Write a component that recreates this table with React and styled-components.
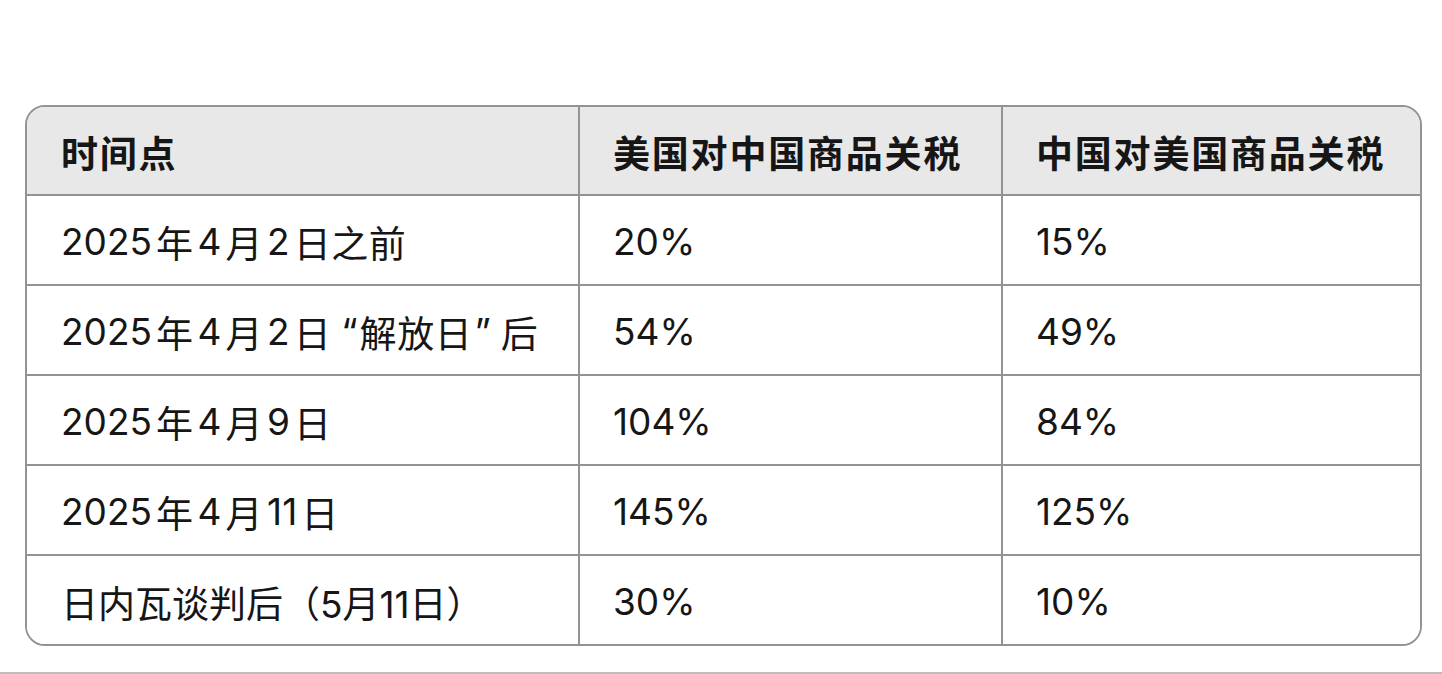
import React from 'react';
import styled, { createGlobalStyle } from 'styled-components';

const GlobalStyle = createGlobalStyle`
  html, body {
    margin: 0;
    padding: 0;
    background: #ffffff;
  }
  body {
    font-family: Inter, "Noto Sans CJK SC", sans-serif;
    color: #161616;
  }
`;

const Page = styled.div`
  width: 1442px;
  height: 674px;
  box-sizing: border-box;
  padding: 105px 20px 0 25px;
  border-bottom: 2px solid #bdbdbd;
`;

const Table = styled.div`
  display: grid;
  grid-template-columns: 551px 423px 1fr;
  width: 1397px;
  border: 2px solid #939393;
  border-radius: 20px;
  overflow: hidden;
  box-sizing: border-box;
`;

const Cell = styled.div`
  height: ${p => (p.head ? 87 : 90)}px;
  box-sizing: border-box;
  display: flex;
  align-items: center;
  padding-left: ${p => (p.first ? 34 : 33)}px;
  padding-top: 3px;
  background: ${p => (p.head ? '#e8e8e8' : '#ffffff')};
  font-size: 37px;
  letter-spacing: ${p => (p.head ? 1.8 : 0)}px;
  font-weight: ${p => (p.head ? 700 : 400)};
  color: #161616;
  white-space: nowrap;
  border-left: ${p => (p.first ? 'none' : '2px solid #939393')};
  border-top: ${p => (p.head ? 'none' : '2px solid #939393')};
`;

// CJK runs get a little breathing room next to digits and quotes
const Han = styled.span`
  font-family: "Noto Sans CJK SC", sans-serif;
  letter-spacing: 0.6px;
  margin-left: ${p => (p.$lead ? 0 : 4)}px;
  margin-right: ${p => (p.$tail ? 0 : 4)}px;
`;

const Quote = styled.span`
  margin-left: ${p => (p.$open ? 6 : -2)}px;
  margin-right: ${p => (p.$open ? -2 : 6)}px;
`;

const CJK = /([\u3000-\u303f\u4e00-\u9fff]+)/;

const spaced = text => {
  const parts = text.split(CJK).filter(Boolean);
  return parts.map((part, i) => {
    if (CJK.test(part)) {
      return (
        <Han key={i} $lead={i === 0} $tail={i === parts.length - 1}>
          {part}
        </Han>
      );
    }
    if (part === '“' || part === '”') {
      return (
        <Quote key={i} $open={part === '“'}>
          {part}
        </Quote>
      );
    }
    return <span key={i}>{part}</span>;
  });
};

const headers = ['时间点', '美国对中国商品关税', '中国对美国商品关税'];

const rows = [
  { when: '2025年4月2日之前', us: '20%', cn: '15%' },
  { when: '2025年4月2日“解放日”后', us: '54%', cn: '49%' },
  { when: '2025年4月9日', us: '104%', cn: '84%' },
  { when: '2025年4月11日', us: '145%', cn: '125%' },
  { when: '日内瓦谈判后（5月11日）', us: '30%', cn: '10%', plain: true },
];

export default function App() {
  return (
    <>
      <GlobalStyle />
      <Page>
        <Table>
          {headers.map((h, i) => (
            <Cell key={h} head first={i === 0}>
              {h}
            </Cell>
          ))}
          {rows.map(row => (
            <React.Fragment key={row.when}>
              <Cell first>{row.plain ? row.when : spaced(row.when)}</Cell>
              <Cell>{row.us}</Cell>
              <Cell>{row.cn}</Cell>
            </React.Fragment>
          ))}
        </Table>
      </Page>
    </>
  );
}
